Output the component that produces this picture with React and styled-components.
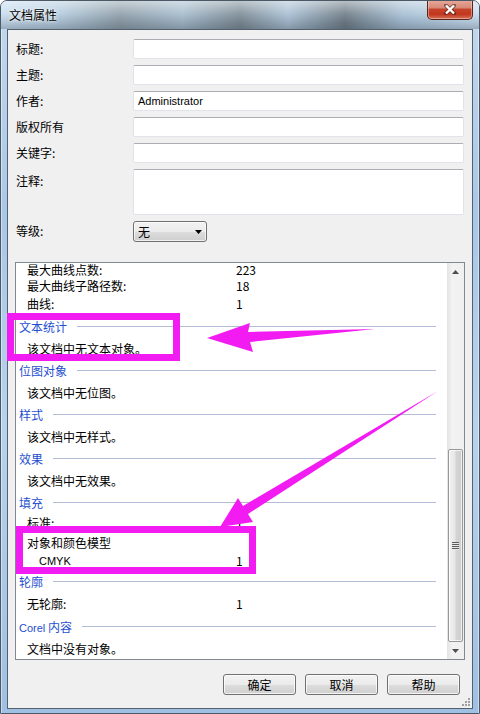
import React from "react";
import styled, { createGlobalStyle } from "styled-components";

const GlobalStyle = createGlobalStyle`
  html, body {
    margin: 0;
    padding: 0;
    background: #ffffff;
  }
  body {
    font-family: "Noto Sans CJK SC", "Liberation Sans", sans-serif;
    font-size: 12px;
    color: #000;
  }
`;

const Win = styled.div`
  position: relative;
  width: 480px;
  height: 714px;
  box-sizing: border-box;
  border: 1px solid #4b5866;
  border-radius: 7px 7px 0 0;
  padding: 0 6px 4px;
  display: flex;
  flex-direction: column;
  overflow: hidden;
  background:
    linear-gradient(to right, rgba(255,255,255,0.45) 0 1px, transparent 1px calc(100% - 1px), rgba(255,255,255,0.45) calc(100% - 1px)),
    linear-gradient(to bottom, #c3d9ee 0%, #a9c7e6 30%, #b7d2ec 60%, #9fc0e2 100%);
`;

const TitleBar = styled.div`
  height: 28px;
  display: flex;
  justify-content: space-between;
  align-items: flex-start;
  margin: 0 -6px;
  padding: 0 6px 0 8px;
  background:
    linear-gradient(to bottom, rgba(255,255,255,0.5) 0%, rgba(255,255,255,0.1) 45%, rgba(40,50,60,0.12) 75%, rgba(40,50,60,0.28) 100%),
    linear-gradient(to right, #c8def1 0%, #b4ccdf 12%, #8f9faa 25%, #a6bccd 38%, #7d8c96 50%, #a9c0d4 60%, #6f7d87 72%, #a6bfd4 84%, #c7dcef 100%);
`;

const Title = styled.div`
  margin-top: 6px;
  font-size: 12px;
  line-height: 16px;
  color: #000;
  text-shadow: 0 0 4px rgba(255,255,255,0.9), 0 0 2px rgba(255,255,255,0.9);
`;

const CloseButton = styled.div`
  margin-top: -1px;
  width: 46px;
  height: 20px;
  box-sizing: border-box;
  border: 1px solid #5d2419;
  border-top: none;
  border-radius: 0 0 5px 5px;
  display: flex;
  align-items: center;
  justify-content: center;
  box-shadow: inset 0 0 0 1px rgba(255,220,210,0.45);
  background: linear-gradient(to bottom, #e8aa9c 0%, #d88a77 40%, #c5432b 50%, #c2361d 75%, #d6735a 100%);
`;

const Client = styled.div`
  flex: 1;
  display: flex;
  flex-direction: column;
  position: relative;
  background: #f0f0f0;
  border: 1px solid #53606d;
`;

const Form = styled.div`
  display: grid;
  grid-template-columns: 117px 331px;
  row-gap: 6px;
  padding: 9px 8px 0 8px;
`;

const Label = styled.div`
  font-size: 12px;
  line-height: 20px;
  padding-top: ${(p) => p.$top || 0}px;
  white-space: nowrap;
`;

const Field = styled.div`
  height: ${(p) => p.$h || 20}px;
  box-sizing: border-box;
  background: #fff;
  border: 1px solid #e2e3ea;
  border-top-color: #abadb3;
  border-radius: 2px;
  padding: 0 4px;
  font-family: "Liberation Sans", "DejaVu Sans", sans-serif;
  font-size: 11px;
  line-height: 18px;
`;

const Select = styled.div`
  width: 74px;
  height: 21px;
  box-sizing: border-box;
  border: 1px solid #707070;
  border-radius: 3px;
  display: flex;
  align-items: center;
  justify-content: space-between;
  padding: 0 4px 0 4px;
  box-shadow: inset 0 0 0 1px rgba(255,255,255,0.7);
  background: linear-gradient(to bottom, #f2f2f2 0%, #ebebeb 50%, #dddddd 51%, #cfcfcf 100%);
`;

const ListBox = styled.div`
  flex: 1;
  margin: 20px 7px 0;
  border: 1px solid #828790;
  background: #fff;
  display: flex;
  overflow: hidden;
`;

const ListBody = styled.div`
  flex: 1;
  overflow: hidden;
  padding-right: 11px;
`;

const ListInner = styled.div`
  display: flex;
  flex-direction: column;
`;

const Stat = styled.div`
  display: grid;
  grid-template-columns: ${(p) => 209 - (p.$indent || 0)}px 1fr;
  height: ${(p) => p.$h || 18}px;
  line-height: 12px;
  align-items: center;
  padding-left: ${(p) => 11 + (p.$indent || 0)}px;
  font-size: 12px;
  white-space: nowrap;
`;

const Latin = styled.span`
  font-family: "Liberation Sans", "DejaVu Sans", sans-serif;
  font-size: 11px;
`;

const Text = styled.div`
  height: ${(p) => p.$h || 22}px;
  display: flex;
  align-items: center;
  padding-left: 11px;
  font-size: 12px;
  white-space: nowrap;
`;

const Header = styled.div`
  height: 22px;
  margin-top: ${(p) => p.$top || 0}px;
  display: flex;
  align-items: center;
  gap: 10px;
  padding-left: 3px;
  color: #1f4fcf;
  font-size: 12px;
  white-space: nowrap;
  &::after {
    content: "";
    flex: 1;
    height: 1px;
    background: #b3bdd5;
  }
`;

const ScrollBar = styled.div`
  width: 17px;
  display: flex;
  flex-direction: column;
  background: linear-gradient(to right, #e3e3e3 0%, #f2f2f2 30%, #f0f0f0 100%);
`;

const ArrowBtn = styled.div`
  height: 17px;
  display: flex;
  align-items: center;
  justify-content: center;
`;

const Track = styled.div`
  flex: 1;
  display: flex;
  flex-direction: column;
`;

const Spacer = styled.div`
  flex: 1;
`;

const Thumb = styled.div`
  height: 193px;
  margin: 0 1px;
  box-sizing: border-box;
  border: 1px solid #979797;
  border-radius: 2px;
  display: flex;
  align-items: center;
  justify-content: center;
  box-shadow: inset 0 0 0 1px rgba(255,255,255,0.7);
  background: linear-gradient(to right, #f2f2f2 0%, #e6e6e6 45%, #d4d4d4 55%, #cdcdcd 100%);
`;

const Grip = styled.div`
  width: 7px;
  height: 8px;
  background: repeating-linear-gradient(to bottom, #5c5c5c 0 1px, #e8e8e8 1px 2px);
`;

const ButtonRow = styled.div`
  display: flex;
  justify-content: flex-end;
  gap: 9px;
  padding: 14px 12px 13px;
`;

const Button = styled.div`
  width: 73px;
  height: 21px;
  box-sizing: border-box;
  border: 1px solid #707070;
  border-radius: 3px;
  display: flex;
  align-items: center;
  justify-content: center;
  font-size: 12px;
  box-shadow: inset 0 0 0 1px rgba(255,255,255,0.75);
  background: linear-gradient(to bottom, #f2f2f2 0%, #ebebeb 50%, #dddddd 51%, #cfcfcf 100%);
`;

const ResizeGrip = styled.svg`
  position: absolute;
  right: 1px;
  bottom: 1px;
`;

const Overlay = styled.svg`
  position: absolute;
  left: 0;
  top: 0;
  pointer-events: none;
`;

const Tri = ({ down }) => (
  <svg width="7" height="4" viewBox="0 0 7 4">
    <path d={down ? "M0 0H7L3.5 4Z" : "M0 4H7L3.5 0Z"} fill="#4d4d4d" />
  </svg>
);

const App = () => {
  return (
    <>
      <GlobalStyle />
      <Win>
        <TitleBar>
          <Title>文档属性</Title>
          <CloseButton>
            <svg width="12" height="11" viewBox="0 0 12 11">
              <path d="M2 1.5L10 9.5M10 1.5L2 9.5" stroke="#3a1a14" strokeWidth="4" strokeLinecap="square" opacity="0.55" />
              <path d="M2 1.5L10 9.5M10 1.5L2 9.5" stroke="#ffffff" strokeWidth="2.4" />
            </svg>
          </CloseButton>
        </TitleBar>

        <Client>
          <Form>
            <Label>标题:</Label>
            <Field />
            <Label>主题:</Label>
            <Field />
            <Label>作者:</Label>
            <Field>Administrator</Field>
            <Label>版权所有</Label>
            <Field />
            <Label>关键字:</Label>
            <Field />
            <Label $top={2}>注释:</Label>
            <Field $h={46} />
            <Label>等级:</Label>
            <Select>
              <span>无</span>
              <svg width="7" height="4" viewBox="0 0 7 4">
                <path d="M0 0H7L3.5 4Z" fill="#000" />
              </svg>
            </Select>
          </Form>

          <ListBox>
            <ListBody>
              <ListInner>
                <Stat $h={13}><span>最大曲线点数:</span><span>223</span></Stat>
                <Stat $h={19}><span>最大曲线子路径数:</span><span>18</span></Stat>
                <Stat $h={17}><span>曲线:</span><span>1</span></Stat>
                <Header $top={3}>文本统计</Header>
                <Text>该文档中无文本对象。</Text>
                <Header>位图对象</Header>
                <Text>该文档中无位图。</Text>
                <Header>样式</Header>
                <Text>该文档中无样式。</Text>
                <Header>效果</Header>
                <Text>该文档中无效果。</Text>
                <Header>填充</Header>
                <Stat $h={19}><span>标准:</span><span>1</span></Stat>
                <Text $h={20}>对象和颜色模型</Text>
                <Stat $indent={12}><Latin>CMYK</Latin><span>1</span></Stat>
                <Header>轮廓</Header>
                <Stat $h={23}><span>无轮廓:</span><span>1</span></Stat>
                <Header><span><Latin>Corel</Latin> 内容</span></Header>
                <Text>文档中没有对象。</Text>
              </ListInner>
            </ListBody>
            <ScrollBar>
              <ArrowBtn><Tri /></ArrowBtn>
              <Track>
                <Spacer />
                <Thumb><Grip /></Thumb>
              </Track>
              <ArrowBtn><Tri down /></ArrowBtn>
            </ScrollBar>
          </ListBox>

          <ButtonRow>
            <Button>确定</Button>
            <Button>取消</Button>
            <Button>帮助</Button>
          </ButtonRow>

          <ResizeGrip width="10" height="10" viewBox="0 0 10 10">
            <g fill="#a0a0a0">
              <rect x="7" y="1" width="2" height="2" />
              <rect x="4" y="4" width="2" height="2" />
              <rect x="7" y="4" width="2" height="2" />
              <rect x="1" y="7" width="2" height="2" />
              <rect x="4" y="7" width="2" height="2" />
              <rect x="7" y="7" width="2" height="2" />
            </g>
          </ResizeGrip>
        </Client>

        <Overlay width="480" height="714" viewBox="0 0 480 714">
          <g fill="none" stroke="#f21cf2" strokeWidth="7">
            <rect x="9.5" y="315.5" width="166" height="41" />
            <rect x="18.5" y="528.5" width="233" height="41" />
          </g>
          <g fill="#f21cf2">
            <polygon points="206,337 249,322 247,331 374,328 249,341 252,351" />
            <polygon points="219,526 237,497 242,505 437,390 247,513 252,521" />
          </g>
        </Overlay>
      </Win>
    </>
  );
};

export default App;
